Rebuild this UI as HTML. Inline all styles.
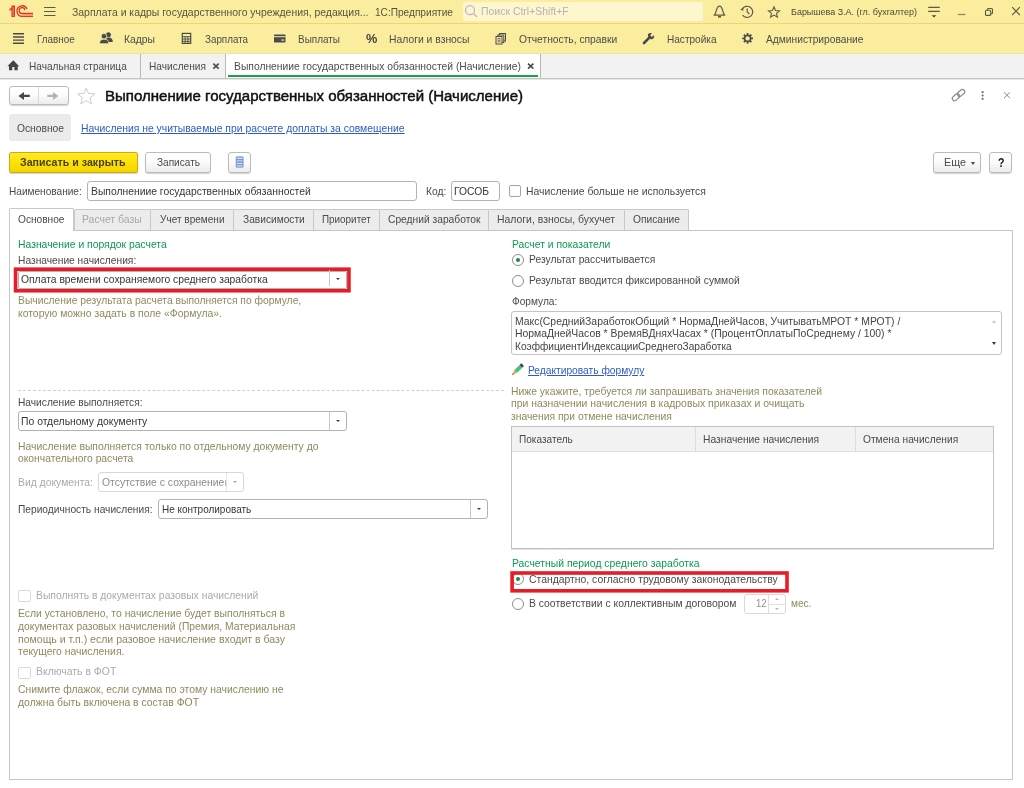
<!DOCTYPE html>
<html><head><meta charset="utf-8">
<style>
*{box-sizing:border-box;margin:0;padding:0}
html,body{width:1024px;height:788px;overflow:hidden;background:#fff}
body{font-family:"Liberation Sans",sans-serif;font-size:11px;color:#3b3b3b;position:relative}
.a{position:absolute}
.t{position:absolute;white-space:nowrap;transform-origin:0 50%}
svg{position:absolute;overflow:visible}
.inp{position:absolute;background:#fff;border:1px solid #b2b2b2;border-radius:3px;height:20px}
.btn{position:absolute;border:1px solid #bcbcbc;border-radius:3px;height:21px;background:linear-gradient(#ffffff 0%,#fbfbfb 50%,#ececec 100%);box-shadow:0 1px 1px rgba(0,0,0,.18)}
.tab{position:absolute;top:209px;height:21px;border:1px solid #c8c8c8;border-bottom:none;background:#ececec;border-radius:2px 2px 0 0}
.cb{position:absolute;width:12px;height:12px;border:1px solid #a3a3a3;border-radius:2px;background:#fff}
.rb{position:absolute;width:12px;height:12px;border:1px solid #8f8f8f;border-radius:50%;background:#fff}
.rb.on:after{content:"";position:absolute;left:3px;top:3px;width:4px;height:4px;border-radius:50%;background:#1c8a3c}
.dd{position:absolute;right:0;top:0;width:17px;height:100%;border-left:1px solid #c8c8c8}
.dd:after{content:"";position:absolute;left:5.5px;top:8px;border:2.5px solid transparent;border-top:2.5px solid #3a3a3a;border-bottom:none}
#root{position:absolute;left:0;top:0;width:1024px;height:788px;will-change:transform;}
</style></head><body><div id="root">
<!-- bars -->
<div class="a" style="left:0;top:0;width:1024px;height:53px;background:#fbed9e"></div>
<div class="a" style="left:0;top:23px;width:1024px;height:1px;background:#e9d67a"></div>
<div class="a" style="left:0;top:53px;width:1024px;height:26px;background:#f2f2f2;border-top:1px solid #e9e2b4;border-bottom:1px solid #c6c6c6"></div>
<div class="a" style="left:0;top:79px;width:1024px;height:1px;background:#e6e6e6"></div>
<!-- search box -->
<div class="a" style="left:463px;top:2px;width:240px;height:19px;background:#fdf6cf;border-radius:2px"></div>
<!-- tab separators / active tab -->
<div class="a" style="left:140px;top:54px;width:1px;height:24px;background:#b9b9b9"></div>
<div class="a" style="left:225px;top:54px;width:1px;height:24px;background:#b9b9b9"></div>
<div class="a" style="left:226px;top:54px;width:314px;height:24px;background:#fff"></div>
<div class="a" style="left:540px;top:54px;width:1px;height:24px;background:#b9b9b9"></div>
<div class="a" style="left:228px;top:75px;width:310px;height:2px;background:#1aa24a"></div>

<!-- nav buttons -->
<div class="btn" style="left:9px;top:86px;width:60px;height:19px"></div>
<div class="a" style="left:38px;top:87px;width:1px;height:17px;background:#dadada"></div>

<!-- section button -->
<div class="a" style="left:9px;top:114px;width:62px;height:27px;background:#ebebeb;border-radius:3px"></div>

<!-- command bar -->
<div class="btn" style="left:9px;top:152px;width:129px;background:linear-gradient(#ffe928 0%,#fde000 55%,#f3d300 100%);border-color:#c9ad0c;border-radius:2px"></div>
<div class="btn" style="left:145px;top:152px;width:66px"></div>
<div class="btn" style="left:228px;top:152px;width:23px"></div>
<div class="btn" style="left:933px;top:152px;width:48px"></div>
<div class="a" style="left:971px;top:162px;border:2.5px solid transparent;border-top:3px solid #444;border-bottom:none"></div>
<div class="btn" style="left:989px;top:152px;width:23px"></div>

<!-- name row -->
<div class="inp" style="left:87px;top:181px;width:330px"></div>
<div class="inp" style="left:451px;top:181px;width:49px"></div>
<div class="cb" style="left:509px;top:185px"></div>

<!-- panel -->
<div class="a" style="left:9px;top:230px;width:1004px;height:550px;border:1px solid #c6c6c6;background:#fff"></div>
<div class="tab" style="left:9px;width:65px;background:#fff;height:23px;top:208px"></div>
<div class="tab" style="left:74px;width:77px"></div>
<div class="tab" style="left:150px;width:84px"></div>
<div class="tab" style="left:233px;width:81px"></div>
<div class="tab" style="left:313px;width:67px"></div>
<div class="tab" style="left:379px;width:110px"></div>
<div class="tab" style="left:488px;width:137px"></div>
<div class="tab" style="left:624px;width:65px"></div>

<!-- left column -->
<svg style="left:0;top:260px" width="1024" height="40" viewBox="0 260 1024 40"><rect x="15.55" y="269.2" width="333.4" height="21.55" fill="#fff" stroke="#e81c28" stroke-width="3.6"/></svg>
<div class="inp" style="left:18px;top:271px;width:329px;height:18px;border-radius:2px"><div class="dd" style="top:-2px"></div></div>
<div class="a" style="left:18px;top:390px;width:486px;border-top:1px dashed #d0d0d0"></div>
<div class="inp" style="left:18px;top:411px;width:329px"><div class="dd"></div></div>
<div class="inp" style="left:98px;top:472px;width:146px;border-color:#d6d6d6"><div class="dd" style="opacity:.45"></div></div>
<div class="inp" style="left:158px;top:499px;width:330px"><div class="dd"></div></div>
<div class="cb" style="left:18px;top:590px;border-color:#d9d9d9;width:13px;height:12px"></div>
<div class="cb" style="left:18px;top:667px;border-color:#d9d9d9;width:13px;height:12px"></div>

<!-- right column -->
<div class="rb on" style="left:512px;top:254px"></div>
<div class="rb" style="left:512px;top:275px"></div>
<div class="a" style="left:511px;top:311px;width:491px;height:44px;border:1px solid #c4c4c4;border-radius:3px;background:#fff"></div>
<div class="a" style="left:992px;top:320px;border:2.5px solid transparent;border-bottom:3px solid #c9c9c9;border-top:none"></div>
<div class="a" style="left:992px;top:342px;border:2.5px solid transparent;border-top:3px solid #3a3a3a;border-bottom:none"></div>
<div class="a" style="left:511px;top:426px;width:483px;height:123px;border:1px solid #c2c2c2;background:#fff;box-shadow:0 1px 0 #e2e2e2"></div>
<div class="a" style="left:512px;top:427px;width:481px;height:25px;background:#f2f2f2;border-bottom:1px solid #dedede"></div>
<div class="a" style="left:695px;top:427px;width:1px;height:25px;background:#dcdcdc"></div>
<div class="a" style="left:855px;top:427px;width:1px;height:25px;background:#dcdcdc"></div>

<div class="rb on" style="left:512px;top:573px"></div>
<svg style="left:0;top:560px" width="1024" height="40" viewBox="0 560 1024 40"><rect x="512.1" y="573" width="274.9" height="17.8" fill="none" stroke="#e81c28" stroke-width="3.6"/></svg>
<div class="rb" style="left:512px;top:598px"></div>
<div class="inp" style="left:744px;top:594px;width:42px;border-color:#d9d9d9"></div>
<div class="a" style="left:768px;top:595px;width:1px;height:18px;background:#dedede"></div>
<div class="a" style="left:769px;top:604px;width:16px;height:1px;background:#e0e0e0"></div>
<div class="a" style="left:775px;top:598px;border:2.5px solid transparent;border-bottom:2.5px solid #b5b5b5;border-top:none"></div>
<div class="a" style="left:775px;top:608px;border:2.5px solid transparent;border-top:2.5px solid #b5b5b5;border-bottom:none"></div>

<div class="t" style="left:72px;top:5.00px;font-size:11px;line-height:14px;color:#55553f;transform:scaleX(0.9494);">Зарплата и кадры государственного учреждения, редакция...</div>
<div class="t" style="left:375px;top:5.00px;font-size:11px;line-height:14px;color:#55553f;transform:scaleX(0.9185);">1С:Предприятие</div>
<div class="t" style="left:481px;top:4.00px;font-size:11px;line-height:14px;color:#b3b3b3;transform:scaleX(0.9514);">Поиск Ctrl+Shift+F</div>
<div class="t" style="left:791px;top:6.00px;font-size:9px;line-height:12px;color:#4a4836;transform:scaleX(0.9968);">Барышева З.А. (гл. бухгалтер)</div>
<div class="t" style="left:36.7px;top:32.00px;font-size:11px;line-height:14px;color:#4c4c4c;transform:scaleX(0.8993);">Главное</div>
<div class="t" style="left:124px;top:32.00px;font-size:11px;line-height:14px;color:#4c4c4c;transform:scaleX(0.9403);">Кадры</div>
<div class="t" style="left:205px;top:32.00px;font-size:11px;line-height:14px;color:#4c4c4c;transform:scaleX(0.8926);">Зарплата</div>
<div class="t" style="left:297.75px;top:32.00px;font-size:11px;line-height:14px;color:#4c4c4c;transform:scaleX(0.9041);">Выплаты</div>
<div class="t" style="left:365.7px;top:30.00px;font-size:13px;line-height:17px;color:#444;transform:scaleX(0.9773);font-weight:bold;">%</div>
<div class="t" style="left:389px;top:32.00px;font-size:11px;line-height:14px;color:#4c4c4c;transform:scaleX(0.9415);">Налоги и взносы</div>
<div class="t" style="left:518.75px;top:32.00px;font-size:11px;line-height:14px;color:#4c4c4c;transform:scaleX(0.9340);">Отчетность, справки</div>
<div class="t" style="left:666.5px;top:32.00px;font-size:11px;line-height:14px;color:#4c4c4c;transform:scaleX(0.9140);">Настройка</div>
<div class="t" style="left:765.5px;top:32.00px;font-size:11px;line-height:14px;color:#4c4c4c;transform:scaleX(0.9294);">Администрирование</div>
<div class="t" style="left:28.75px;top:59.00px;font-size:11px;line-height:14px;color:#4c4c4c;transform:scaleX(0.9184);">Начальная страница</div>
<div class="t" style="left:149px;top:59.00px;font-size:11px;line-height:14px;color:#4c4c4c;transform:scaleX(0.9205);">Начисления</div>
<div class="t" style="left:234px;top:59.00px;font-size:11px;line-height:14px;color:#4c4c4c;transform:scaleX(0.9377);">Выполнениие государственных обязанностей (Начисление)</div>
<div class="t" style="left:104.5px;top:87.00px;font-size:14px;line-height:18px;color:#111;transform:scaleX(1.0730);-webkit-text-stroke:0.45px #111;">Выполнениие государственных обязанностей (Начисление)</div>
<div class="t" style="left:17px;top:121.00px;font-size:11px;line-height:14px;color:#4a4a4a;transform:scaleX(0.9324);">Основное</div>
<div class="t" style="left:80.5px;top:121.00px;font-size:11px;line-height:14px;color:#2d5cc0;transform:scaleX(0.9428);text-decoration:underline;">Начисления не учитываемые при расчете доплаты за совмещение</div>
<div class="t" style="left:20px;top:155.00px;font-size:11px;line-height:14px;color:#463f1c;transform:scaleX(0.9676);font-weight:bold;">Записать и закрыть</div>
<div class="t" style="left:156.5px;top:155.00px;font-size:11px;line-height:14px;color:#4a4a4a;transform:scaleX(0.9146);">Записать</div>
<div class="t" style="left:943.8px;top:155.00px;font-size:11px;line-height:14px;color:#4a4a4a;transform:scaleX(0.9826);">Еще</div>
<div class="t" style="left:997.5px;top:154.00px;font-size:13px;line-height:17px;color:#111;transform:scaleX(0.8173);font-weight:bold;">?</div>
<div class="t" style="left:9px;top:184.00px;font-size:11px;line-height:14px;color:#4a4a4a;transform:scaleX(0.9173);">Наименование:</div>
<div class="t" style="left:90.5px;top:184.00px;font-size:11px;line-height:14px;color:#363636;transform:scaleX(0.9405);">Выполнениие государственных обязанностей</div>
<div class="t" style="left:425.5px;top:184.00px;font-size:11px;line-height:14px;color:#4a4a4a;transform:scaleX(0.9304);">Код:</div>
<div class="t" style="left:454.2px;top:184.00px;font-size:11px;line-height:14px;color:#363636;transform:scaleX(0.9365);">ГОСОБ</div>
<div class="t" style="left:526px;top:184.00px;font-size:11px;line-height:14px;color:#4a4a4a;transform:scaleX(0.9426);">Начисление больше не используется</div>
<div class="t" style="left:18px;top:212.00px;font-size:11px;line-height:14px;color:#4a4a4a;transform:scaleX(0.9225);">Основное</div>
<div class="t" style="left:81.8px;top:212.00px;font-size:11px;line-height:14px;color:#a8a8a8;transform:scaleX(0.9469);">Расчет базы</div>
<div class="t" style="left:160px;top:212.00px;font-size:11px;line-height:14px;color:#4a4a4a;transform:scaleX(0.9143);">Учет времени</div>
<div class="t" style="left:242.75px;top:212.00px;font-size:11px;line-height:14px;color:#4a4a4a;transform:scaleX(0.9249);">Зависимости</div>
<div class="t" style="left:321.5px;top:212.00px;font-size:11px;line-height:14px;color:#4a4a4a;transform:scaleX(0.8984);">Приоритет</div>
<div class="t" style="left:387.75px;top:212.00px;font-size:11px;line-height:14px;color:#4a4a4a;transform:scaleX(0.9319);">Средний заработок</div>
<div class="t" style="left:497px;top:212.00px;font-size:11px;line-height:14px;color:#4a4a4a;transform:scaleX(0.9474);">Налоги, взносы, бухучет</div>
<div class="t" style="left:632.8px;top:212.00px;font-size:11px;line-height:14px;color:#4a4a4a;transform:scaleX(0.9284);">Описание</div>
<div class="t" style="left:18px;top:237.00px;font-size:11px;line-height:14px;color:#0a9a50;transform:scaleX(0.9418);">Назначение и порядок расчета</div>
<div class="t" style="left:18px;top:253.00px;font-size:11px;line-height:14px;color:#4a4a4a;transform:scaleX(0.9290);">Назначение начисления:</div>
<div class="t" style="left:21.25px;top:272.00px;font-size:11px;line-height:14px;color:#363636;transform:scaleX(0.9386);">Оплата времени сохраняемого среднего заработка</div>
<div class="t" style="left:18px;top:293.00px;font-size:11px;line-height:14px;color:#8e8a5e;transform:scaleX(0.9371);">Вычисление результата расчета выполняется по формуле,</div>
<div class="t" style="left:18px;top:306.00px;font-size:11px;line-height:14px;color:#8e8a5e;transform:scaleX(0.9453);">которую можно задать в поле «Формула».</div>
<div class="t" style="left:18px;top:395.00px;font-size:11px;line-height:14px;color:#4a4a4a;transform:scaleX(0.9267);">Начисление выполняется:</div>
<div class="t" style="left:21.25px;top:414.00px;font-size:11px;line-height:14px;color:#363636;transform:scaleX(0.9446);">По отдельному документу</div>
<div class="t" style="left:18px;top:439.00px;font-size:11px;line-height:14px;color:#8e8a5e;transform:scaleX(0.9429);">Начисление выполняется только по отдельному документу до</div>
<div class="t" style="left:18px;top:451.00px;font-size:11px;line-height:14px;color:#8e8a5e;transform:scaleX(0.9375);">окончательного расчета</div>
<div class="t" style="left:18px;top:475.00px;font-size:11px;line-height:14px;color:#aaaaaa;transform:scaleX(0.9415);">Вид документа:</div>
<div class="t" style="left:101.75px;top:475.00px;font-size:11px;line-height:14px;color:#8c8c8c;transform:scaleX(0.9450);width:131px;overflow:hidden;">Отсутствие с сохранением</div>
<div class="t" style="left:18px;top:502.00px;font-size:11px;line-height:14px;color:#4a4a4a;transform:scaleX(0.9271);">Периодичность начисления:</div>
<div class="t" style="left:162px;top:502.00px;font-size:11px;line-height:14px;color:#363636;transform:scaleX(0.9065);">Не контролировать</div>
<div class="t" style="left:36px;top:588.00px;font-size:11px;line-height:14px;color:#aaaaaa;transform:scaleX(0.9419);">Выполнять в документах разовых начислений</div>
<div class="t" style="left:18px;top:606.00px;font-size:11px;line-height:14px;color:#8e8a5e;transform:scaleX(0.9440);">Если установлено, то начисление будет выполняться в</div>
<div class="t" style="left:18px;top:619.00px;font-size:11px;line-height:14px;color:#8e8a5e;transform:scaleX(0.9388);">документах разовых начислений (Премия, Материальная</div>
<div class="t" style="left:18px;top:632.00px;font-size:11px;line-height:14px;color:#8e8a5e;transform:scaleX(0.9564);">помощь и т.п.) если разовое начисление входит в базу</div>
<div class="t" style="left:18px;top:644.00px;font-size:11px;line-height:14px;color:#8e8a5e;transform:scaleX(0.9453);">текущего начисления.</div>
<div class="t" style="left:36px;top:664.00px;font-size:11px;line-height:14px;color:#aaaaaa;transform:scaleX(0.9478);">Включать в ФОТ</div>
<div class="t" style="left:18px;top:682.00px;font-size:11px;line-height:14px;color:#8e8a5e;transform:scaleX(0.9429);">Снимите флажок, если сумма по этому начислению не</div>
<div class="t" style="left:18px;top:695.00px;font-size:11px;line-height:14px;color:#8e8a5e;transform:scaleX(0.9458);">должна быть включена в состав ФОТ</div>
<div class="t" style="left:511.75px;top:237.00px;font-size:11px;line-height:14px;color:#0a9a50;transform:scaleX(0.9399);">Расчет и показатели</div>
<div class="t" style="left:529.25px;top:252.00px;font-size:11px;line-height:14px;color:#4a4a4a;transform:scaleX(0.9353);">Результат рассчитывается</div>
<div class="t" style="left:529.25px;top:273.00px;font-size:11px;line-height:14px;color:#4a4a4a;transform:scaleX(0.9405);">Результат вводится фиксированной суммой</div>
<div class="t" style="left:511.75px;top:294.00px;font-size:11px;line-height:14px;color:#4a4a4a;transform:scaleX(0.9208);">Формула:</div>
<div class="t" style="left:514.5px;top:314.00px;font-size:11px;line-height:14px;color:#444;transform:scaleX(0.9442);">Макс(СреднийЗаработокОбщий * НормаДнейЧасов, УчитыватьМРОТ * МРОТ) /</div>
<div class="t" style="left:514.5px;top:326.00px;font-size:11px;line-height:14px;color:#444;transform:scaleX(0.9449);">НормаДнейЧасов * ВремяВДняхЧасах * (ПроцентОплатыПоСреднему / 100) *</div>
<div class="t" style="left:514.5px;top:339.00px;font-size:11px;line-height:14px;color:#444;transform:scaleX(0.9202);">КоэффициентИндексацииСреднегоЗаработка</div>
<div class="t" style="left:528.25px;top:363.00px;font-size:11px;line-height:14px;color:#2d5cc0;transform:scaleX(0.9285);text-decoration:underline;">Редактировать формулу</div>
<div class="t" style="left:511.25px;top:384.00px;font-size:11px;line-height:14px;color:#8e8a5e;transform:scaleX(0.9409);">Ниже укажите, требуется ли запрашивать значения показателей</div>
<div class="t" style="left:511.25px;top:396.00px;font-size:11px;line-height:14px;color:#8e8a5e;transform:scaleX(0.9487);">при назначении начисления в кадровых приказах и очищать</div>
<div class="t" style="left:511.25px;top:409.00px;font-size:11px;line-height:14px;color:#8e8a5e;transform:scaleX(0.9388);">значения при отмене начисления</div>
<div class="t" style="left:518.75px;top:432.00px;font-size:11px;line-height:14px;color:#4a4a4a;transform:scaleX(0.9139);">Показатель</div>
<div class="t" style="left:702.5px;top:432.00px;font-size:11px;line-height:14px;color:#4a4a4a;transform:scaleX(0.9338);">Назначение начисления</div>
<div class="t" style="left:862.75px;top:432.00px;font-size:11px;line-height:14px;color:#4a4a4a;transform:scaleX(0.9287);">Отмена начисления</div>
<div class="t" style="left:511.5px;top:556.00px;font-size:11px;line-height:14px;color:#0a9a50;transform:scaleX(0.9437);">Расчетный период среднего заработка</div>
<div class="t" style="left:528.8px;top:572.00px;font-size:11px;line-height:14px;color:#4a4a4a;transform:scaleX(0.9445);">Стандартно, согласно трудовому законодательству</div>
<div class="t" style="left:528.7px;top:596.00px;font-size:11px;line-height:14px;color:#4a4a4a;transform:scaleX(0.9418);">В соответствии с коллективным договором</div>
<div class="t" style="left:755.6px;top:596.00px;font-size:11px;line-height:14px;color:#909090;transform:scaleX(0.8694);">12</div>
<div class="t" style="left:790.6px;top:596.00px;font-size:11px;line-height:14px;color:#8e8a5e;transform:scaleX(0.9169);">мес.</div>
<!-- ICONS -->
<svg style="left:0;top:0" width="1024" height="120" viewBox="0 0 1024 120">
<!-- 1C logo -->
<g fill="none" stroke="#e2352c" stroke-width="1.3">
<path d="M27,8.9 A5.25,5.25 0 1 0 22.2,16.35 L33,16.35"/>
<path d="M24.9,10.2 A2.9,2.9 0 1 0 22.2,13.5 L33,13.5"/>
</g>
<rect x="22.4" y="14.15" width="10.6" height="1.55" fill="#f0906e"/>
<path d="M9.4,9.3 L11.6,7.2 L11.6,5.5 L15,5.5 L15,17 L11.4,17 L11.4,9.6 L9.4,11 Z" fill="#e2352c"/>
<rect x="12.6" y="7.2" width="1" height="9.2" fill="#f0906e"/>
<!-- hamburger -->
<g stroke="#5c5a48" stroke-width="1">
<path d="M44,7.5H55.5M44,11.5H55.5M44,15.5H55.5"/>
</g>
<!-- magnifier -->
<g fill="none" stroke="#b9b8c2" stroke-width="1.3">
<circle cx="470" cy="10.2" r="4.5"/><path d="M473.3,13.6L477,17"/>
</g>
<!-- bell -->
<g fill="none" stroke="#5c5a48" stroke-width="1.2" stroke-linejoin="round">
<path d="M714.2,15.2 C716.8,13.5 715.8,6.2 719.5,6.2 C723.2,6.2 722.2,13.5 724.8,15.2 Z"/>
<path d="M718,16.8 H721" stroke-width="1.6"/>
</g>
<!-- history clock -->
<g fill="none" stroke="#5c5a48" stroke-width="1.2">
<path d="M742.2,9.2 A5.6,5.6 0 1 1 742.6,15.2"/>
<path d="M747.2,8.4 V11.8 L749.4,14"/>
</g>
<path d="M740.2,9.8 L743.4,7.6 L743.2,10.8 Z" fill="#5c5a48"/>
<!-- star -->
<path d="M774,6.9 L775.55,10.55 L779.5,10.85 L776.5,13.4 L777.45,17.2 L774,15.1 L770.55,17.2 L771.5,13.4 L768.5,10.85 L772.45,10.55 Z" fill="none" stroke="#5c5a48" stroke-width="1.1" stroke-linejoin="miter"/>
<!-- lines menu -->
<g stroke="#5c5a48" stroke-width="1.1"><path d="M928.2,7.4H939.8M928.2,11.4H939.8"/></g>
<path d="M931.6,15.2H936.4L934,17.6Z" fill="#4a4838"/>
<!-- min / restore / close -->
<path d="M958,14.5H965.4" stroke="#8d8868" stroke-width="1.3"/>
<g fill="none" stroke="#5c5a48" stroke-width="1.1">
<rect x="987.3" y="8.5" width="5.2" height="5.2" rx="1"/>
<rect x="985.5" y="10.2" width="5.2" height="5.2" rx="1" fill="#fbed9e"/>
<path d="M1012.2,7.2L1019.8,15M1019.8,7.2L1012.2,15"/>
</g>

<!-- menu: main -->
<g stroke="#4a4a4a" stroke-width="1.4"><path d="M13,33.8H24M13,37H24M13,40.1H24M13,43.3H24"/></g>
<!-- people -->
<g fill="#4a4a4a">
<circle cx="108.4" cy="34.7" r="2.5"/>
<path d="M105.5,42 C105.5,38.5 107,37.6 108.6,37.6 C111.5,37.6 112.8,39.5 112.8,42 Z"/>
<circle cx="104" cy="36.2" r="2.8" stroke="#fbed9e" stroke-width="0.8"/>
<path d="M99.5,43.8 C99.5,40.3 101.3,39.2 104,39.2 C106.9,39.2 108.9,40.3 108.9,43.8 Z" stroke="#fbed9e" stroke-width="0.8"/>
</g>
<!-- calculator -->
<g fill="none" stroke="#4a4a4a">
<rect x="182.3" y="33.4" width="8.4" height="10" stroke-width="1.2"/>
<path d="M182.3,36.6H190.7M182.3,39H190.7M182.3,41.3H190.7M185.1,36.6V43.4M187.9,36.6V43.4" stroke-width="0.9"/>
</g>
<!-- card -->
<rect x="274" y="34.5" width="11.5" height="8" rx="0.8" fill="#4a4a4a"/>
<rect x="274" y="36.2" width="11.5" height="1" fill="#fbed9e"/>
<rect x="281.3" y="39.3" width="3" height="1.6" fill="#c9bf86"/>
<!-- docs -->
<g fill="#fbed9e" stroke="#4a4a4a" stroke-width="1">
<rect x="499.5" y="33.5" width="6" height="7.5"/>
<rect x="497.8" y="35" width="6" height="7.5"/>
<rect x="496" y="36.5" width="6" height="7.5"/>
<path d="M497.5,38.6H500.5M497.5,40.2H500.5M497.5,41.8H500.5" stroke-width="0.8"/>
</g>
<!-- wrench -->
<g stroke="#4a4a4a" fill="none" stroke-linecap="round">
<path d="M644,43 L649.8,37.2" stroke-width="2.6"/>
</g>
<path d="M648,36.2 C647.2,33.6 649.8,32.4 652,33.2 L650.2,35.2 L651.9,37 L653.9,35.2 C654.8,37.6 653,39.8 650.6,39.2 Z" fill="#4a4a4a"/>
<!-- gear -->
<g fill="none" stroke="#4a4a4a">
<circle cx="747.6" cy="38.4" r="3" stroke-width="1.6"/>
<path d="M747.6,33V35M747.6,41.8V43.8M742.2,38.4H744.2M751,38.4H753M743.8,34.6L745.2,36M750,40.8L751.4,42.2M743.8,42.2L745.2,40.8M750,36L751.4,34.6" stroke-width="1.7"/>
</g>

<!-- home -->
<path d="M7.4,66.2 L13.3,60.2 L19.2,66.2 L17.7,66.2 L17.7,70.2 L14.4,70.2 L14.4,67 L12.3,67 L12.3,70.2 L9,70.2 L9,66.2 Z" fill="#444"/>
<!-- tab close x -->
<g stroke="#484848" stroke-width="1.5"><path d="M213.3,63.6L218.7,68.6M218.7,63.6L213.3,68.6"/><path d="M528,63.6L533.4,68.6M533.4,63.6L528,68.6"/></g>

<!-- nav arrows -->
<path d="M18.4,95.9 L24,91.9 L24,94.8 L29.8,94.8 L29.8,97 L24,97 L24,99.9 Z" fill="#474747"/>
<path d="M58.5,95.9 L52.9,91.9 L52.9,94.8 L47.3,94.8 L47.3,97 L52.9,97 L52.9,99.9 Z" fill="#b2b2b2"/>
<!-- fav star -->
<path d="M86.2,88 L88.5,93.4 L94.8,93.9 L90,97.8 L91.6,104 L86.2,100.6 L80.8,104 L82.4,97.8 L77.6,93.9 L83.9,93.4 Z" fill="none" stroke="#cbcbcb" stroke-width="1"/>
<!-- link icon -->
<g fill="none" stroke="#888" stroke-width="1.15">
<rect x="-4.1" y="-2.3" width="8.2" height="4.6" rx="2.3" transform="translate(961.1,92.9) rotate(-40)"/>
<rect x="-4.1" y="-2.3" width="8.2" height="4.6" rx="2.3" transform="translate(956,97.2) rotate(-40)"/>
</g>
<!-- dots -->
<g fill="#6e6e6e"><circle cx="982.6" cy="92.2" r="1.1"/><circle cx="982.6" cy="95.5" r="1.1"/><circle cx="982.6" cy="98.8" r="1.1"/></g>
<!-- close form -->
<path d="M1004,92.3L1010,98.2M1010,92.3L1004,98.2" stroke="#8a8a8a" stroke-width="1"/>
</svg>
<!-- list icon -->
<svg style="left:0;top:120px" width="1024" height="100" viewBox="0 120 1024 100">
<rect x="235.7" y="156.3" width="7.9" height="11.4" rx="1.2" fill="#8aa8da"/>
<g stroke="#e3ecf9" stroke-width="0.9"><path d="M237,158.4H242.3M237,160.9H242.3M237,163.5H242.3M237,165.9H242.3"/></g>
<g stroke="#7190ba" stroke-width="0.7"><path d="M235.9,159.65H243.4M235.9,162.2H243.4M235.9,164.7H243.4"/></g>
</svg>
<!-- pencil -->
<svg style="left:500px;top:355px" width="40" height="30" viewBox="500 355 40 30">
<g transform="translate(512.1,374.9) rotate(-44)">
<path d="M0,0 L1.9,-0.8 L1.9,0.8 Z" fill="#3a3020"/>
<path d="M1.9,-0.8 L5,-1.9 L5,1.9 L1.9,0.8 Z" fill="#e2a23e"/>
<path d="M3,-0.6 L5,-0.9 L5,0.9 L3,0.6 Z" fill="#f2a680"/>
<rect x="5" y="-1.9" width="7" height="3.8" fill="#45c07f"/>
<rect x="12" y="-1.9" width="2.8" height="3.8" rx="0.5" fill="#4d474c"/>
</g>
</svg>

</div></body></html>
